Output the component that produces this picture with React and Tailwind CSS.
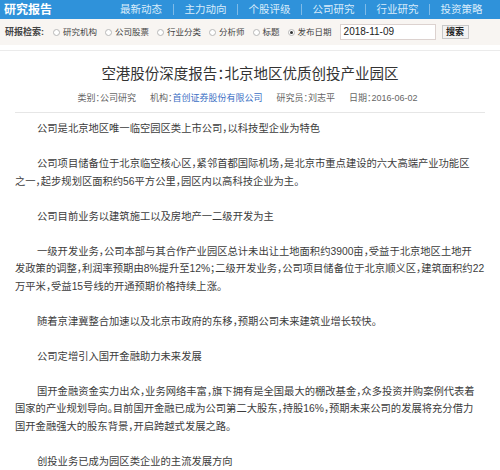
import React from 'react';

const navItems = ['最新动态', '主力动向', '个股评级', '公司研究', '行业研究', '投资策略'];

const searchOptions = [
  { label: '研究机构', checked: false },
  { label: '公司股票', checked: false },
  { label: '行业分类', checked: false },
  { label: '分析师', checked: false },
  { label: '标题', checked: false },
  { label: '发布日期', checked: true },
];

// each paragraph is a list of lines, as wrapped in the original page
const paragraphs = [
  ['公司是北京地区唯一临空园区类上市公司，以科技型企业为特色'],
  [
    '公司项目储备位于北京临空核心区，紧邻首都国际机场，是北京市重点建设的六大高端产业功能区',
    '之一，起步规划区面积约56平方公里，园区内以高科技企业为主。',
  ],
  ['公司目前业务以建筑施工以及房地产一二级开发为主'],
  [
    '一级开发业务，公司本部与其合作产业园区总计未出让土地面积约3900亩，受益于北京地区土地开',
    '发政策的调整，利润率预期由8%提升至12%；二级开发业务，公司项目储备位于北京顺义区，建筑面积约22',
    '万平米，受益15号线的开通预期价格持续上涨。',
  ],
  ['随着京津冀整合加速以及北京市政府的东移，预期公司未来建筑业增长较快。'],
  ['公司定增引入国开金融助力未来发展'],
  [
    '国开金融资金实力出众，业务网络丰富，旗下拥有是全国最大的棚改基金，众多投资并购案例代表着',
    '国家的产业规划导向。目前国开金融已成为公司第二大股东，持股16%，预期未来公司的发展将充分借力',
    '国开金融强大的股东背景，开启跨越式发展之路。',
  ],
  ['创投业务已成为园区类企业的主流发展方向'],
];

const Radio = ({ checked }) => (
  <span className="w-[7px] h-[7px] rounded-full border border-[#b8b8b8] bg-white flex items-center justify-center shrink-0">
    {checked && <span className="w-[3px] h-[3px] rounded-full bg-[#333]" />}
  </span>
);

export default function App() {
  return (
    <div className="w-[500px] h-[470px] overflow-hidden bg-white font-['Liberation_Sans','Noto_Sans_CJK_SC',sans-serif] text-[#333] [font-feature-settings:'halt']">
      {/* top bar */}
      <div className="h-[19px] bg-[#2f92da] flex items-center">
        <div className="w-[109px] pl-[4px] text-white text-[12px] font-bold leading-none">研究报告</div>
        <div className="flex">
          {navItems.map((item, i) => (
            <div
              key={item}
              className={`w-[64px] text-center text-[10.5px] leading-[11px] text-[#d9ecfa] ${i > 0 ? 'border-l border-[#7fbbe8]' : ''}`}
            >
              {item}
            </div>
          ))}
        </div>
      </div>

      {/* search row */}
      <div className="h-[26px] bg-[#f8f5f2] flex items-center pl-[5px] text-[8.5px] leading-none">
        <span className="w-[48px] font-bold text-[#444] text-[9px]">研报检索:</span>
        <div className="flex items-center">
          {searchOptions.map(opt => (
            <label key={opt.label} className="flex items-center gap-[3px] mr-[8px] text-[#444]">
              <Radio checked={opt.checked} />
              <span>{opt.label}</span>
            </label>
          ))}
        </div>
        <div className="w-[96px] h-[16px] border border-[#dcd2cf] bg-white flex items-center pl-[3px] text-[10px] text-[#222]">
          2018-11-09
        </div>
        <button className="ml-[6px] w-[27px] h-[14px] border border-[#c8c8c8] bg-[#f2f2f2] text-[9px] font-bold text-[#222] leading-none">
          搜索
        </button>
      </div>

      <div className="mt-[5px] h-px bg-[#ebebeb]" />

      {/* article header */}
      <h1 className="mt-[14px] text-center text-[14.5px] leading-[18px] text-[#333] font-normal">
        空港股份深度报告：北京地区优质创投产业园区
      </h1>
      <div className="mt-[9px] flex justify-center gap-[14px] text-[9px] leading-[12px] text-[#666] pr-[5px]">
        <span>类别：公司研究</span>
        <span>机构：<span className="text-[#3b6fc4]">首创证券股份有限公司</span></span>
        <span>研究员：刘志平</span>
        <span>日期：2016-06-02</span>
      </div>
      <div className="mx-[15px] mt-[8px] h-px bg-[#e6e6e6]" />

      {/* body */}
      <div className="px-[15px] pt-[7px] text-[10.3px] leading-[17.5px] text-[#3c3c3c]">
        {paragraphs.map((lines, i) => (
          <p key={i} className="mb-[17.5px] whitespace-nowrap">
            {lines.map((line, j) => (
              <span key={j} className={`block ${j === 0 ? 'pl-[22px]' : ''}`}>
                {line}
              </span>
            ))}
          </p>
        ))}
      </div>
    </div>
  );
}
